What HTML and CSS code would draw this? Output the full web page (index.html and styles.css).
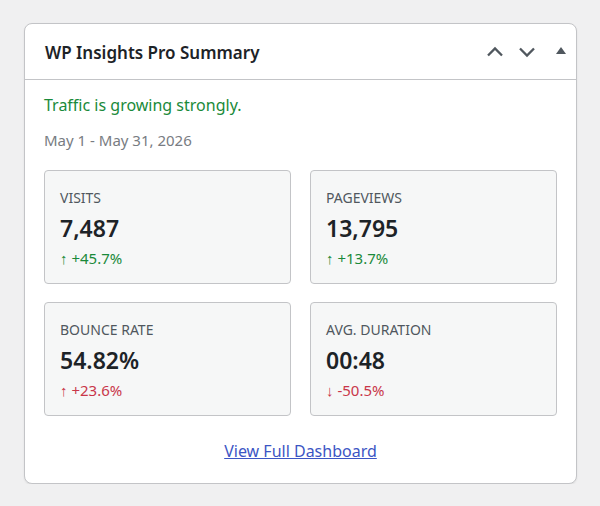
FILE: index.html
```html
<!DOCTYPE html>
<html lang="en">
<head>
  <meta charset="UTF-8">
  <meta name="viewport" content="width=device-width, initial-scale=1.0">
  <title>WP Insights Pro Summary</title>
  <link rel="stylesheet" href="styles.css">
</head>
<body>
  <div class="postbox">
    <div class="postbox-header">
      <h2 class="hndle">WP Insights Pro Summary</h2>
      <div class="handle-actions">
        <button class="handle-btn" aria-label="Move up">
          <svg width="20" height="20" viewBox="0 0 20 20"><path d="M3 13.5 L10 6.5 L17 13.5" fill="none" stroke="#50575e" stroke-width="2.3"/></svg>
        </button>
        <button class="handle-btn down" aria-label="Move down">
          <svg width="20" height="20" viewBox="0 0 20 20"><path d="M3 6.5 L10 13.5 L17 6.5" fill="none" stroke="#50575e" stroke-width="2.3"/></svg>
        </button>
        <button class="handle-btn toggle" aria-label="Toggle panel">
          <svg width="12" height="12" viewBox="0 0 12 12"><path d="M1 10 L6 3 L11 10 Z" fill="#50575e"/></svg>
        </button>
      </div>
    </div>

    <div class="inside">
      <p class="status">Traffic is growing strongly.</p>
      <p class="range">May 1 - May 31, 2026</p>

      <div class="stats">
        <div class="stat">
          <span class="stat-label">Visits</span>
          <span class="stat-value">7,487</span>
          <span class="stat-change up">&uarr; +45.7%</span>
        </div>
        <div class="stat">
          <span class="stat-label">Pageviews</span>
          <span class="stat-value">13,795</span>
          <span class="stat-change up">&uarr; +13.7%</span>
        </div>
        <div class="stat">
          <span class="stat-label">Bounce Rate</span>
          <span class="stat-value">54.82%</span>
          <span class="stat-change bad">&uarr; +23.6%</span>
        </div>
        <div class="stat">
          <span class="stat-label">Avg. Duration</span>
          <span class="stat-value">00:48</span>
          <span class="stat-change bad">&darr; -50.5%</span>
        </div>
      </div>

      <p class="more"><a href="#">View Full Dashboard</a></p>
    </div>
  </div>
</body>
</html>
```

FILE: styles.css
```css
body {
  margin: 0;
  padding: 23px 23px 0 24px;
  background-color: #f0f0f1; /* gris de fondo del escritorio */
  font-family: "Noto Sans", "Open Sans", sans-serif;
  color: #1d2327;
}

.postbox {
  background-color: #ffffff;
  border: 1px solid #c3c4c7;
  border-radius: 8px;
  box-shadow: 0 1px 2px rgba(0, 0, 0, 0.08);
}

.postbox-header {
  height: 54px;
  display: flex;
  align-items: center;
  justify-content: space-between;
  padding: 1px 0 0 20px;
  border-bottom: 1px solid #c3c4c7;
}

.hndle {
  margin: 0;
  font-size: 17px;
  font-weight: 600;
  color: #1d2327;
}

.handle-actions {
  display: flex;
  align-items: center;
}

.handle-btn {
  width: 32px;
  height: 36px;
  padding: 0;
  border: none;
  background: none;
  display: flex;
  align-items: center;
  justify-content: center;
  cursor: pointer;
}

.handle-btn.down {
  margin-right: 3px;
}

.handle-btn.toggle {
  width: 30px;
  margin-top: -4px;
}

.inside {
  padding: 14px 19px 21px;
}

.status {
  margin: 0;
  font-size: 16px;
  color: #1a8a3a;
}

.range {
  margin: 14px 0 0;
  font-size: 15px;
  color: #787c82;
}

.stats {
  display: grid;
  grid-template-columns: 1fr 1fr;
  gap: 18px 19px;
  margin-top: 20px;
}

.stat {
  height: 114px;
  box-sizing: border-box;
  padding: 17px 15px;
  background-color: #f6f7f7;
  border: 1px solid #c3c4c7;
  border-radius: 4px;
  display: flex;
  flex-direction: column;
}

.stat-label {
  font-size: 14px;
  text-transform: uppercase;
  color: #50575e;
}

.stat-value {
  margin-top: 5px;
  font-size: 23px;
  font-weight: 600;
  color: #1d2327;
}

.stat-change {
  margin-top: 4px;
  font-size: 15px;
}

.stat-change.up {
  color: #1a8a3a;
}

.stat-change.bad {
  color: #c9364a;
}

.more {
  margin: 24px 0 0;
  text-align: center;
  font-size: 16px;
}

.more a {
  color: #3c55c4;
}
```
